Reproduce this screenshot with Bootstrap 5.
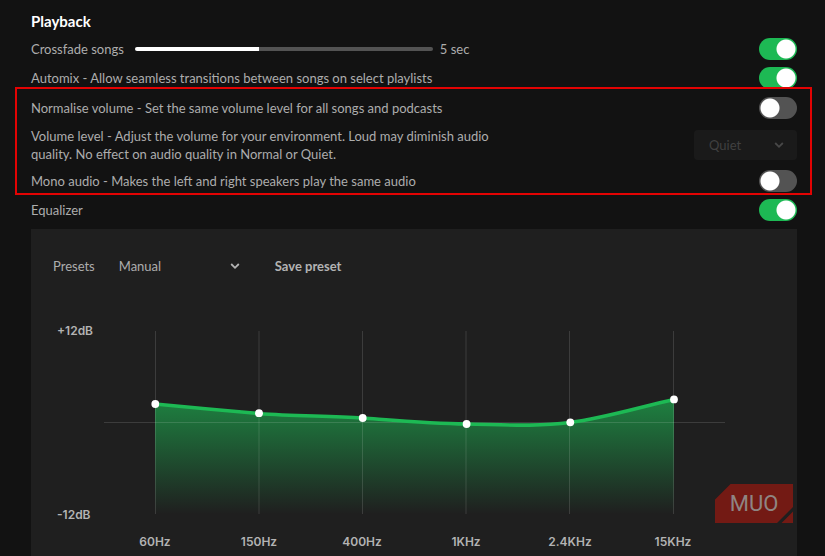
<!DOCTYPE html>
<html lang="en" data-bs-theme="dark">
<head>
<meta charset="utf-8">
<meta name="viewport" content="width=device-width, initial-scale=1">
<title>Playback settings</title>
<link href="https://cdn.jsdelivr.net/npm/bootstrap@5.3.0/dist/css/bootstrap.min.css" rel="stylesheet">
<style>
  body { background: #121212; color: #adadad; font: 400 13px/18px Lato, "Noto Sans", sans-serif; }
  .settings { padding: 12px 28px 0 31px; }
  .section-title { color: #fff; font-size: 15px; line-height: 18px; font-weight: 700; margin-bottom: 8px; }
  .setting-list, .setting-group { display: flex; flex-direction: column; gap: 7px; }
  .setting-group { padding-top: 1px; }
  .setting { display: flex; align-items: center; justify-content: space-between; min-height: 22px; }
  .setting-tall { min-height: 37px; }
  .setting-tall label { max-width: 480px; }
  .form-check-input.toggle {
    width: 38px; height: 22px; margin: 0; border: 0; border-radius: 11px; flex: none;
    background: #535353 radial-gradient(circle at center, #fff 9px, transparent 10px) left center / 22px 22px no-repeat;
  }
  .form-check-input.toggle:checked { background-color: #1db954; background-position: right center; }
  .fade-range {
    appearance: none; width: 298px; height: 4px; margin: 0 7px 0 11px; border-radius: 2px;
    background: linear-gradient(to right, #fff var(--fill), #535353 var(--fill));
  }
  .fade-range::-webkit-slider-thumb { appearance: none; width: 0; height: 4px; }
  .form-select.picker {
    font-size: 13px; line-height: 18px; border: 0; border-radius: 4px; color: #adadad; background-color: transparent;
    background-image: url("data:image/svg+xml,%3Csvg xmlns='http://www.w3.org/2000/svg' viewBox='0 0 10 8'%3E%3Cpath d='M1.2 2 5 5.8 8.800 2' fill='none' stroke='%23b3b3b3' stroke-width='1.8'/%3E%3C/svg%3E");
    background-size: 10px 8px;
  }
  .picker.level { width: 103px; height: 30px; padding: 6px 28px 6px 15px; background-position: right 13px center; }
  .picker.level:disabled { color: #404040; background-color: #1a1a1a; opacity: 1;
    background-image: url("data:image/svg+xml,%3Csvg xmlns='http://www.w3.org/2000/svg' viewBox='0 0 10 8'%3E%3Cpath d='M1.2 2 5 5.8 8.800 2' fill='none' stroke='%23484848' stroke-width='1.8'/%3E%3C/svg%3E"); }
  .picker.preset { width: 121px; padding: 6px 20px 6px 0; background-position: right 0 center; }
  .highlight { position: absolute; inset: -9px -15px -3px -16px; border: 2px solid #e30303; pointer-events: none; }
  .equalizer { background: #1f1f1f; margin-top: 8px; }
  .eq-bar { padding: 22px 22px 29px; }
  .save-link { color: #b3b3b3; font-size: 13px; line-height: 18px; font-weight: 700; margin-left: 35px; }
  .eq-chart { display: block; width: 100%; font-family: Inter, sans-serif; font-size: 12px; font-weight: 600; fill: #b3b3b3; }
  .brand-mark { position: absolute; right: 4px; bottom: 33px; width: 78px; height: 39px; }
</style>
</head>
<body>
<main class="settings">
  <h2 class="section-title">Playback</h2>
  <div class="setting-list">
    <div class="setting">
      <div class="d-flex align-items-center">
        <label for="crossfade">Crossfade songs</label>
        <input type="range" class="fade-range" id="crossfade" min="0" max="12" value="5" style="--fill:41.67%">
        <output for="crossfade">5 sec</output>
      </div>
      <input class="form-check-input toggle" type="checkbox" role="switch" aria-label="Crossfade" checked>
    </div>
    <div class="setting">
      <label for="automix">Automix - Allow seamless transitions between songs on select playlists</label>
      <input class="form-check-input toggle" type="checkbox" role="switch" id="automix" checked>
    </div>
    <div class="setting-group position-relative">
      <div class="setting">
        <label for="normalise">Normalise volume - Set the same volume level for all songs and podcasts</label>
        <input class="form-check-input toggle" type="checkbox" role="switch" id="normalise">
      </div>
      <div class="setting setting-tall">
        <label for="level">Volume level - Adjust the volume for your environment. Loud may diminish audio quality. No effect on audio quality in Normal or Quiet.</label>
        <select class="form-select picker level" id="level" disabled><option>Quiet</option></select>
      </div>
      <div class="setting">
        <label for="mono">Mono audio - Makes the left and right speakers play the same audio</label>
        <input class="form-check-input toggle" type="checkbox" role="switch" id="mono">
      </div>
      <div class="highlight"></div>
    </div>
    <div class="setting">
      <label for="eq">Equalizer</label>
      <input class="form-check-input toggle" type="checkbox" role="switch" id="eq" checked>
    </div>
  </div>

  <section class="equalizer position-relative">
    <div class="eq-bar d-flex align-items-center">
      <label for="preset" class="me-4">Presets</label>
      <select class="form-select picker preset" id="preset"><option>Manual</option></select>
      <button type="button" class="btn p-0 border-0 save-link">Save preset</button>
    </div>
    <svg class="eq-chart" viewBox="31 310 766 246" role="img" aria-label="Equalizer curve">
      <defs>
        <linearGradient id="fade" gradientUnits="userSpaceOnUse" x1="0" y1="399" x2="0" y2="514">
          <stop offset="0" stop-color="#1db954" stop-opacity=".64"/>
          <stop offset="1" stop-color="#1db954" stop-opacity="0"/>
        </linearGradient>
      </defs>
      <path fill="url(#fade)" d="M155 404C190 407.500 224 410.500 259 413.500S328 415.500 362.500 418S432 423.500 466.500 424S535 427 570 422.500S640 407 674 399.500V514H155Z"/>
      <path fill="none" stroke="#fff" stroke-opacity=".13" d="M155.500 331V514M259 331V514M362.500 331V514M466 331V514M569.500 331V514M673.500 331V514M104 422.500H725"/>
      <path fill="none" stroke="#1db954" stroke-width="3.600" d="M155 404C190 407.500 224 410.500 259 413.500S328 415.500 362.500 418S432 423.500 466.500 424S535 427 570 422.500S640 407 674 399.500"/>
      <g fill="#fff">
        <circle cx="155.300" cy="404" r="3.900"/><circle cx="259" cy="413.200" r="3.900"/><circle cx="362.700" cy="418" r="3.900"/>
        <circle cx="466.600" cy="424" r="3.900"/><circle cx="570.300" cy="422.300" r="3.900"/><circle cx="674" cy="399.400" r="3.900"/>
      </g>
      <text x="57" y="335">+12dB</text>
      <text x="57" y="519">-12dB</text>
      <g text-anchor="middle">
        <text x="155" y="546">60Hz</text><text x="259" y="546">150Hz</text><text x="362" y="546">400Hz</text>
        <text x="466" y="546">1KHz</text><text x="570" y="546">2.4KHz</text><text x="673" y="546">15KHz</text>
      </g>
    </svg>
    <svg class="brand-mark" viewBox="0 0 78 39" role="img" aria-label="MUO">
      <path fill="#731a14" d="M15.500 0H78V23L62 39H0V15.500ZM78 27.500V39H66.500Z"/>
      <text x="39" y="27" text-anchor="middle" font-family="Roboto, sans-serif" font-size="22" fill="#8f8583">MUO</text>
    </svg>
  </section>
</main>
</body>
</html>
